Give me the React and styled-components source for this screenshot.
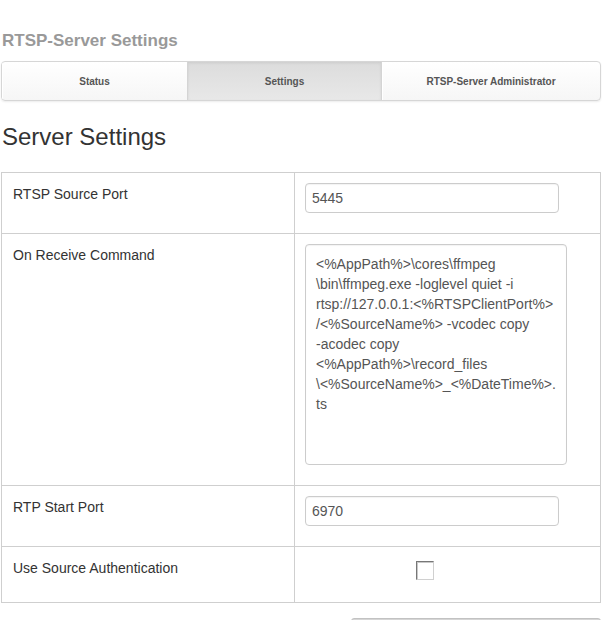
import React from "react";
import styled, { createGlobalStyle } from "styled-components";

const GlobalStyle = createGlobalStyle`
  body {
    margin: 0;
    background: #fff;
    font-family: "Liberation Sans", Arial, sans-serif;
    color: #333;
  }
`;

const Page = styled.div`
  width: 600px;
  margin: 0 1px;
  padding-top: 31px;
`;

const Title = styled.h1`
  margin: 0 0 10px 1px;
  font-size: 17px;
  line-height: 20px;
  font-weight: bold;
  color: #999;
`;

const TabBar = styled.nav`
  box-sizing: border-box;
  display: grid;
  grid-template-columns: 185px 194px 1fr;
  height: 40px;
  border: 1px solid #d6d6d6;
  border-radius: 4px;
  background: linear-gradient(#ffffff, #f6f6f6);
  box-shadow: 0 1px 2px rgba(0, 0, 0, 0.08);
  overflow: hidden;
`;

const Tab = styled.a`
  display: flex;
  align-items: center;
  justify-content: center;
  font-size: 10px;
  font-weight: bold;
  color: #555;
  text-decoration: none;
  border-left: ${(p) => (p.$first ? "none" : "1px solid #d4d4d4")};
  background: ${(p) =>
    p.$active ? "linear-gradient(#dcdcdc, #e8e8e8)" : "transparent"};
  box-shadow: ${(p) =>
    p.$active ? "inset 0 1px 3px rgba(0,0,0,0.08)" : "inset 1px 0 0 #fff"};
`;

const Heading = styled.h2`
  margin: 22px 0 21px 1px;
  font-size: 24px;
  line-height: 28px;
  font-weight: normal;
  color: #333;
`;

const Table = styled.div`
  border: 1px solid #cfcfcf;
  border-top: none;
`;

const Row = styled.div`
  display: grid;
  grid-template-columns: 292px 1fr;
  border-top: 1px solid #cfcfcf;
`;

const Label = styled.div`
  padding: 11px 11px 23px 11px;
  font-size: 14px;
  line-height: 20px;
  color: #333;
`;

const Field = styled.div`
  border-left: 1px solid #cfcfcf;
  padding: ${(p) => (p.$check ? "14px 10px 22px 121px" : "10px 10px 20px 10px")};
  display: flex;
  align-items: flex-start;
`;

const TextInput = styled.input`
  box-sizing: border-box;
  width: 254px;
  height: 30px;
  padding: 0 6px;
  border: 1px solid #cccccc;
  border-radius: 4px;
  box-shadow: inset 0 1px 1px rgba(0, 0, 0, 0.05);
  font-family: "Liberation Sans", Arial, sans-serif;
  font-size: 14px;
  color: #555;
  outline: none;
`;

const TextArea = styled.textarea`
  box-sizing: border-box;
  width: 262px;
  height: 221px;
  padding: 9px 10px 5px;
  border: 1px solid #cccccc;
  border-radius: 4px;
  box-shadow: inset 0 1px 1px rgba(0, 0, 0, 0.05);
  font-family: "Liberation Sans", Arial, sans-serif;
  font-size: 14px;
  line-height: 20px;
  color: #555;
  resize: none;
  overflow: hidden;
  white-space: pre;
  outline: none;
`;

const CheckBox = styled.input`
  appearance: none;
  box-sizing: border-box;
  width: 18px;
  height: 19px;
  margin: 0;
  background: #fff;
  border-top: 1px solid #777;
  border-left: 1px solid #777;
  border-right: 1px solid #d0d0d0;
  border-bottom: 1px solid #d0d0d0;
  box-shadow: inset 1px 1px 0 #c8c8c8;
`;

const Footer = styled.div`
  display: flex;
  justify-content: flex-end;
  margin-top: 15px;
`;

const SaveButton = styled.button`
  width: 250px;
  height: 34px;
  border: 1px solid #c2c2c2;
  border-radius: 3px;
  background: linear-gradient(#d4d4d4, #f2f2f2 30%, #e8e8e8);
`;

const command = [
  "<%AppPath%>\\cores\\ffmpeg",
  "\\bin\\ffmpeg.exe -loglevel quiet -i",
  "rtsp://127.0.0.1:<%RTSPClientPort%>",
  "/<%SourceName%> -vcodec copy",
  "-acodec copy",
  "<%AppPath%>\\record_files",
  "\\<%SourceName%>_<%DateTime%>.",
  "ts",
].join("\n");

export default function App() {
  return (
    <Page>
      <GlobalStyle />
      <Title>RTSP-Server Settings</Title>
      <TabBar>
        <Tab $first>Status</Tab>
        <Tab $active>Settings</Tab>
        <Tab>RTSP-Server Administrator</Tab>
      </TabBar>
      <Heading>Server Settings</Heading>
      <Table>
        <Row>
          <Label>RTSP Source Port</Label>
          <Field>
            <TextInput defaultValue="5445" />
          </Field>
        </Row>
        <Row>
          <Label>On Receive Command</Label>
          <Field>
            <TextArea defaultValue={command} />
          </Field>
        </Row>
        <Row>
          <Label>RTP Start Port</Label>
          <Field>
            <TextInput defaultValue="6970" />
          </Field>
        </Row>
        <Row>
          <Label>Use Source Authentication</Label>
          <Field $check>
            <CheckBox type="checkbox" />
          </Field>
        </Row>
      </Table>
      <Footer>
        <SaveButton type="button" aria-label="Save" />
      </Footer>
    </Page>
  );
}
